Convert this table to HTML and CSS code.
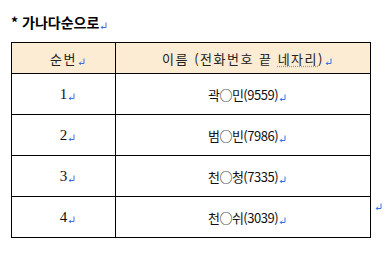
FILE: index.html
```html
<!DOCTYPE html>
<html lang="ko">
<head>
<meta charset="utf-8">
<link rel="stylesheet" href="styles.css">
</head>
<body>
<div class="page">
  <p class="title">* 가나다순으로<span class="pm"><svg viewBox="0 0 7 7" width="7" height="7"><path d="M6 0.5V5.5H1.2M3 3.7L1.2 5.5L3 7.3" fill="none" stroke="#3f72e0" stroke-width="1"/></svg></span></p>
  <div class="wrap">
    <div class="grid">
      <div class="cell head"><span class="txt">순번<span class="pm"><svg viewBox="0 0 7 7" width="7" height="7"><path d="M6 0.5V5.5H1.2M3 3.7L1.2 5.5L3 7.3" fill="none" stroke="#3f72e0" stroke-width="1"/></svg></span></span></div>
      <div class="cell head"><span class="txt">이름 (전화번호 끝 <span class="spell">네자리</span>)<span class="pm"><svg viewBox="0 0 7 7" width="7" height="7"><path d="M6 0.5V5.5H1.2M3 3.7L1.2 5.5L3 7.3" fill="none" stroke="#3f72e0" stroke-width="1"/></svg></span></span></div>

      <div class="cell num"><span class="txt">1<span class="pm"><svg viewBox="0 0 7 7" width="7" height="7"><path d="M6 0.5V5.5H1.2M3 3.7L1.2 5.5L3 7.3" fill="none" stroke="#3f72e0" stroke-width="1"/></svg></span></span></div>
      <div class="cell name"><span class="txt">곽○민(9559)<span class="pm"><svg viewBox="0 0 7 7" width="7" height="7"><path d="M6 0.5V5.5H1.2M3 3.7L1.2 5.5L3 7.3" fill="none" stroke="#3f72e0" stroke-width="1"/></svg></span></span></div>

      <div class="cell num"><span class="txt">2<span class="pm"><svg viewBox="0 0 7 7" width="7" height="7"><path d="M6 0.5V5.5H1.2M3 3.7L1.2 5.5L3 7.3" fill="none" stroke="#3f72e0" stroke-width="1"/></svg></span></span></div>
      <div class="cell name"><span class="txt">범○빈(7986)<span class="pm"><svg viewBox="0 0 7 7" width="7" height="7"><path d="M6 0.5V5.5H1.2M3 3.7L1.2 5.5L3 7.3" fill="none" stroke="#3f72e0" stroke-width="1"/></svg></span></span></div>

      <div class="cell num"><span class="txt">3<span class="pm"><svg viewBox="0 0 7 7" width="7" height="7"><path d="M6 0.5V5.5H1.2M3 3.7L1.2 5.5L3 7.3" fill="none" stroke="#3f72e0" stroke-width="1"/></svg></span></span></div>
      <div class="cell name"><span class="txt">천○청(7335)<span class="pm"><svg viewBox="0 0 7 7" width="7" height="7"><path d="M6 0.5V5.5H1.2M3 3.7L1.2 5.5L3 7.3" fill="none" stroke="#3f72e0" stroke-width="1"/></svg></span></span></div>

      <div class="cell num"><span class="txt">4<span class="pm"><svg viewBox="0 0 7 7" width="7" height="7"><path d="M6 0.5V5.5H1.2M3 3.7L1.2 5.5L3 7.3" fill="none" stroke="#3f72e0" stroke-width="1"/></svg></span></span></div>
      <div class="cell name"><span class="txt">천○쉬(3039)<span class="pm"><svg viewBox="0 0 7 7" width="7" height="7"><path d="M6 0.5V5.5H1.2M3 3.7L1.2 5.5L3 7.3" fill="none" stroke="#3f72e0" stroke-width="1"/></svg></span></span></div>
    </div>
    <span class="pm end"><svg viewBox="0 0 7 7" width="7" height="7"><path d="M6 0.5V5.5H1.2M3 3.7L1.2 5.5L3 7.3" fill="none" stroke="#3f72e0" stroke-width="1"/></svg></span>
  </div>
</div>
</body>
</html>
```

FILE: styles.css
```css
html, body {
  margin: 0;
  padding: 0;
  background: #ffffff;
}
.page {
  width: 385px;
  height: 257px;
  padding: 11px 0 0 11px;
  box-sizing: border-box;
  font-family: "Noto Sans CJK KR", "Noto Sans", sans-serif;
  color: #111;
}
.title {
  margin: 0;
  height: 31px;
  line-height: 22px;
  font-size: 14px;
  font-weight: bold;
  color: #000;
}
.pm {
  display: inline-block;
  width: 7px;
  height: 7px;
  margin-left: 1px;
  vertical-align: -1px;
  letter-spacing: 0;
}
.pm svg {
  display: block;
}
.wrap {
  display: flex;
  align-items: flex-end;
}
.grid {
  display: grid;
  grid-template-columns: 104px 255px;
  grid-template-rows: 31px repeat(4, 41px);
  border-left: 1px solid #000;
  border-top: 1px solid #000;
}
.cell {
  border-right: 1px solid #000;
  border-bottom: 1px solid #000;
  display: flex;
  align-items: center;
  justify-content: center;
  padding-left: 8px;
  font-size: 13px;
  white-space: nowrap;
}
.txt {
  white-space: pre;
}
.head {
  background: #fbecd3;
  color: #222;
  letter-spacing: 1.5px;
}
.spell {
  text-decoration: underline dotted #e6900a;
  text-underline-offset: 2px;
}
.num {
  font-family: "Liberation Serif", "Noto Sans CJK KR", serif;
  font-size: 15px;
}
.name {
  letter-spacing: -0.5px;
}
.end {
  margin-left: 4px;
  margin-bottom: 28px;
}
```
